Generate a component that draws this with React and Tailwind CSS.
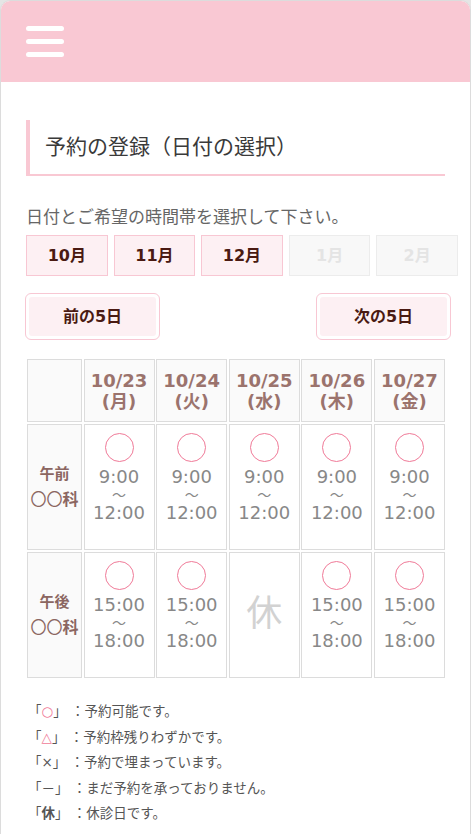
import React from "react";

const font = { fontFamily: '"DejaVu Sans", "Noto Sans CJK JP", sans-serif' };

const months = [
  { label: "10月", active: true },
  { label: "11月", active: true },
  { label: "12月", active: true },
  { label: "1月", active: false },
  { label: "2月", active: false },
];

const days = [
  { date: "10/23", wd: "月" },
  { date: "10/24", wd: "火" },
  { date: "10/25", wd: "水" },
  { date: "10/26", wd: "木" },
  { date: "10/27", wd: "金" },
];

const rows = [
  { name: "午前", start: "9:00", end: "12:00", closed: [] },
  { name: "午後", start: "15:00", end: "18:00", closed: [2] },
];

const legend = [
  { mark: "○", cls: "text-[#f07a98]", text: "予約可能です。" },
  { mark: "△", cls: "text-[#f07a98]", text: "予約枠残りわずかです。" },
  { mark: "×", cls: "", text: "予約で埋まっています。" },
  { mark: "－", cls: "", text: "まだ予約を承っておりません。" },
  { mark: "休", cls: "font-bold", text: "休診日です。" },
];

const NavButton = ({ children }) => (
  <button className="w-[135px] h-[47px] rounded-md border border-[#f8c7d3] bg-white p-[3px]">
    <span className="flex h-full w-full items-center justify-center rounded-[3px] bg-[#fdf0f3] text-[16px] font-bold text-[#4a1a12]">
      {children}
    </span>
  </button>
);

const App = () => {
  return (
    <div className="min-h-[834px] w-[471px] bg-[#e5e5e5]" style={font}>
      <div className="min-h-[834px] rounded-t-[10px] border border-b-0 border-[#dcdcdc] bg-white">
        {/* header */}
        <div className="h-[81px] rounded-t-[9px] bg-[#f9c8d3] pl-[25px] pt-[25px]">
          <div className="flex w-[38px] flex-col gap-[8px]">
            <span className="block h-[5px] rounded-full bg-white"></span>
            <span className="block h-[5px] rounded-full bg-white"></span>
            <span className="block h-[5px] rounded-full bg-white"></span>
          </div>
        </div>

        <div className="px-[25px]">
          {/* title */}
          <div className="mt-[38px] flex h-[56px] items-center border-b-2 border-l-4 border-[#f9c8d3] pl-[15px]">
            <h2 className="text-[21px] leading-none text-[#3a3a3a]">予約の登録（日付の選択）</h2>
          </div>

          <p className="mt-[31px] text-[17px] leading-[20px] text-[#666]">日付とご希望の時間帯を選択して下さい。</p>

          {/* months */}
          <div className="mt-[8px] mr-[-13px] grid grid-cols-5 gap-[6px]">
            {months.map((m) => (
              <button
                key={m.label}
                className={
                  m.active
                    ? "h-[41px] border border-[#f8c7d3] bg-[#fdf0f3] text-[16px] font-bold text-[#4a1a12]"
                    : "h-[41px] border border-[#ececec] bg-[#f8f8f8] text-[16px] font-bold text-[#e4e4e4]"
                }
              >
                {m.label}
              </button>
            ))}
          </div>

          {/* prev / next */}
          <div className="mt-[17px] ml-[-1px] mr-[-6px] flex justify-between">
            <NavButton>前の5日</NavButton>
            <NavButton>次の5日</NavButton>
          </div>

          {/* table */}
          <div className="mt-[19px] ml-[1px] grid grid-cols-[55px_repeat(5,1fr)] gap-x-[1.5px] gap-y-[2px]">
            <div className="h-[63px] border border-[#dcdcdc] bg-[#fafafa]"></div>
            {days.map((d) => (
              <div
                key={d.date}
                className="flex h-[63px] flex-col items-center justify-center border border-[#dcdcdc] bg-[#fafafa] text-[18px] font-bold leading-[21px] text-[#9b736d]"
              >
                <span>{d.date}</span>
                <span>({d.wd})</span>
              </div>
            ))}

            {rows.map((r) => (
              <React.Fragment key={r.name}>
                <div className="flex h-[126px] flex-col items-center justify-center border border-[#dcdcdc] bg-[#fafafa] text-[15px] font-bold leading-[26px] text-[#8b6661]">
                  <span>{r.name}</span>
                  <span className="text-[16px]">
                    <span className="font-normal">〇〇</span>科
                  </span>
                </div>
                {days.map((d, i) =>
                  r.closed.includes(i) ? (
                    <div
                      key={d.date}
                      className="flex h-[126px] items-center justify-center border border-[#dcdcdc] bg-white pb-[2px] text-[36px] text-[#d2d2d2]"
                    >
                      休
                    </div>
                  ) : (
                    <div
                      key={d.date}
                      className="flex h-[126px] flex-col items-center border border-[#dcdcdc] bg-white pt-[8px] text-[18px] leading-[18px] text-[#888]"
                    >
                      <span className="mb-[6px] block h-[29px] w-[29px] rounded-full border-[1.5px] border-[#f07a98]"></span>
                      <span>{r.start}</span>
                      <span className="text-[14px]">～</span>
                      <span>{r.end}</span>
                    </div>
                  )
                )}
              </React.Fragment>
            ))}
          </div>

          {/* legend */}
          <ul className="mt-[21px] ml-[2px] text-[13.5px] leading-[25.5px] text-[#555]">
            {legend.map((l) => (
              <li key={l.text}>
                「<span className={l.cls}>{l.mark}</span>」 ：{l.text}
              </li>
            ))}
          </ul>
        </div>
      </div>
    </div>
  );
};

export default App;
